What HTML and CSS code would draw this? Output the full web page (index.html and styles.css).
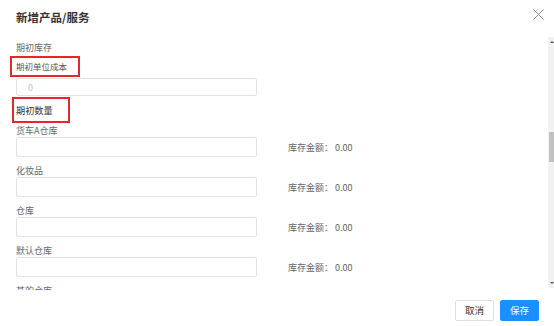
FILE: index.html
```html
<!DOCTYPE html>
<html lang="zh-CN">
<head>
<meta charset="utf-8">
<title>新增产品/服务</title>
<link rel="stylesheet" href="styles.css">
</head>
<body>
<div class="dialog">
  <header class="dlg-head">
    <h2 class="dlg-title">新增产品/服务</h2>
    <button class="dlg-close" aria-label="关闭">
      <svg width="11" height="11" viewBox="0 0 11 11"><path d="M0.5 0.5 L10.5 10.5 M10.5 0.5 L0.5 10.5" stroke="#8c919c" stroke-width="1" fill="none"/></svg>
    </button>
  </header>
  <div class="dlg-body">
    <div class="scroll-content">
      <div class="sec-title">期初库存</div>
      <div class="cost-label">期初单位成本</div>
      <input class="field field-small" type="text" placeholder="0">
      <div class="qty-title">期初数量</div>
      <div class="group first">
        <div class="label">货车A仓库</div>
        <div class="row"><input class="field" type="text"><span class="amount">库存金额： 0.00</span></div>
      </div>
      <div class="group">
        <div class="label">化妆品</div>
        <div class="row"><input class="field" type="text"><span class="amount">库存金额： 0.00</span></div>
      </div>
      <div class="group">
        <div class="label">仓库</div>
        <div class="row"><input class="field" type="text"><span class="amount">库存金额： 0.00</span></div>
      </div>
      <div class="group">
        <div class="label">默认仓库</div>
        <div class="row"><input class="field" type="text"><span class="amount">库存金额： 0.00</span></div>
      </div>
      <div class="group">
        <div class="label">某的仓库</div>
      </div>
    </div>
    <div class="scrollbar">
      <span class="sb-btn"><span class="arrow-up"></span></span>
      <span class="sb-thumb"></span>
      <span class="sb-fill"></span>
      <span class="sb-btn"><span class="arrow-down"></span></span>
    </div>
  </div>
  <footer class="dlg-foot">
    <button class="btn">取消</button>
    <button class="btn btn-primary">保存</button>
  </footer>
  <span class="mark mark-cost"></span>
  <span class="mark mark-qty"></span>
</div>
</body>
</html>
```

FILE: styles.css
```css
* { box-sizing: border-box; }
html, body { margin: 0; padding: 0; background: #fff; }
body {
  font-family: "Noto Sans CJK SC", "Noto Sans", sans-serif;
  color: #666;
}
.dialog {
  position: relative;
  width: 554px;
  height: 326px;
  display: flex;
  flex-direction: column;
  background: #fff;
  overflow: hidden;
}
.dlg-head {
  height: 37px;
  flex: none;
  display: flex;
  align-items: flex-start;
  justify-content: space-between;
  padding: 0 10px 0 16px;
}
.dlg-title {
  margin: 10px 0 0;
  font-size: 11.5px;
  line-height: 14px;
  font-weight: 700;
  color: #333;
}
.dlg-close {
  margin-top: 9px;
  padding: 0;
  border: 0;
  background: none;
  width: 11px;
  height: 11px;
  display: block;
}
.dlg-close svg { display: block; }
.dlg-body {
  height: 253px;
  flex: none;
  display: flex;
}
.scroll-content {
  flex: 1;
  overflow: hidden;
  padding: 5px 0 0 16px;
}
.sec-title {
  font-size: 9px;
  line-height: 12px;
  color: #666;
}
.cost-label {
  margin-top: 6px;
  font-size: 8.5px;
  line-height: 12px;
  color: #555;
}
.qty-title {
  margin-top: 8px;
  font-size: 9.2px;
  line-height: 12px;
  color: #333;
}
.field {
  display: block;
  width: 241px;
  height: 20px;
  margin: 0;
  border: 1px solid #dfe2e8;
  border-radius: 2px;
  background: #fff;
  font: inherit;
  font-size: 9px;
  padding: 0 0 0 11px;
  outline: none;
}
.field-small {
  height: 18px;
  margin-top: 6px;
}
.field::placeholder { color: #c3c6cc; }
.group { margin-top: 7px; }
.group.first { margin-top: 8px; }
.label {
  font-size: 9px;
  line-height: 13px;
  color: #666;
}
.row {
  display: flex;
  align-items: center;
}
.amount {
  margin-left: 31px;
  font-size: 9px;
  color: #666;
  white-space: nowrap;
}
.scrollbar {
  width: 6px;
  height: 251px;
  flex: none;
  display: flex;
  flex-direction: column;
  background: #f1f1f1;
}
.sb-btn {
  height: 10px;
  flex: none;
  display: flex;
  align-items: center;
  justify-content: center;
  padding-left: 1px;
}
.arrow-up {
  width: 0; height: 0;
  border-left: 2px solid transparent;
  border-right: 2px solid transparent;
  border-bottom: 2px solid #505050;
}
.arrow-down {
  width: 0; height: 0;
  border-left: 2px solid transparent;
  border-right: 2px solid transparent;
  border-top: 2px solid #505050;
}
.sb-thumb {
  margin: 85px 0 0 1px;
  height: 30px;
  flex: none;
  background: #c1c1c1;
}
.sb-fill { flex: 1; }
.dlg-foot {
  flex: 1;
  display: flex;
  justify-content: flex-end;
  align-items: flex-start;
  gap: 6px;
  padding: 10px 15px 0 0;
}
.btn {
  width: 39px;
  height: 21px;
  padding: 0;
  border: 1px solid #dcdfe6;
  border-radius: 2px;
  background: #fff;
  color: #333;
  font: inherit;
  font-size: 9.5px;
  line-height: 19px;
}
.btn-primary {
  background: #1890ff;
  border-color: #1890ff;
  color: #fff;
}
.mark {
  position: absolute;
  border: 2px solid #e6262b;
  pointer-events: none;
}
.mark-cost { left: 10px; top: 56px; width: 70px; height: 21px; }
.mark-qty { left: 12px; top: 97px; width: 58px; height: 26px; }
```
